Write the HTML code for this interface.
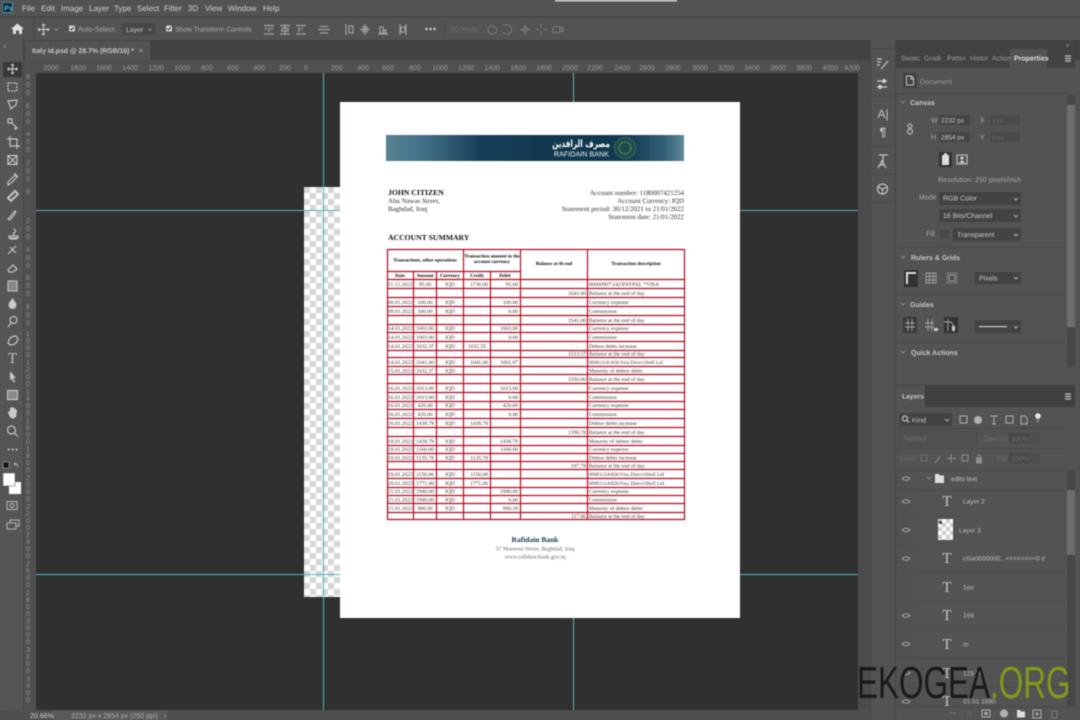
<!DOCTYPE html>
<html><head><meta charset="utf-8"><title>Photoshop</title>
<style>
html,body{margin:0;padding:0;background:#535353;width:1080px;height:720px;overflow:hidden}
svg{display:block;filter:blur(.5px);text-rendering:geometricPrecision}
text{font-family:"Liberation Sans","DejaVu Sans",sans-serif;font-size:7px;fill:#bdbdbd}
.menu text{font-size:8px;fill:#d0d0d0}
.rul text{font-size:7px;fill:#9a9a9a;text-anchor:middle}
.vr text{font-size:7px;fill:#929292;text-anchor:middle}
.ic{fill:none;stroke:#c4c4c4;stroke-width:1.2}
.icd{fill:none;stroke:#8a8a8a;stroke-width:1}
.fl{fill:#c8c8c8;stroke:none}
.b{font-weight:bold;fill:#c8c8c8}
.dim{fill:#6f6f6f}
.doc text{font-family:"Liberation Serif",serif;font-size:5.5px;fill:#3a3a3a}
.doc .h{font-weight:bold;font-size:4.9px;fill:#000}
.doc .m{text-anchor:middle}
.doc .r{text-anchor:end}
.doc .s{font-size:6.9px;fill:#333}
.lay text{font-size:6.5px;fill:#bcbcbc}
.tt{font-family:"Liberation Serif",serif!important;font-size:15px!important;fill:#c4c4c4!important;text-anchor:middle}
</style></head><body>
<svg width="1080" height="720" viewBox="0 0 1080 720" xmlns="http://www.w3.org/2000/svg">
<defs>
<pattern id="ck" x="304" y="187" width="12" height="12" patternUnits="userSpaceOnUse"><rect width="12" height="12" fill="#fff"/><rect width="6" height="6" fill="#d6d6d6"/><rect x="6" y="6" width="6" height="6" fill="#d6d6d6"/></pattern>
<pattern id="ck2" x="938" y="519" width="8" height="8" patternUnits="userSpaceOnUse"><rect width="8" height="8" fill="#fff"/><rect width="4" height="4" fill="#ccc"/><rect x="4" y="4" width="4" height="4" fill="#ccc"/></pattern>
<linearGradient id="bn" x1="0" x2="1" y1="0" y2="0"><stop offset="0" stop-color="#55808f"/><stop offset=".12" stop-color="#3f6f86"/><stop offset=".3" stop-color="#173f5a"/><stop offset=".55" stop-color="#12384f"/><stop offset=".8" stop-color="#12384f"/><stop offset=".93" stop-color="#2c5a72"/><stop offset="1" stop-color="#5c8795"/></linearGradient>
<pattern id="st" width="2.5" height="3" patternUnits="userSpaceOnUse"><rect width="1" height="3" fill="#fff" opacity=".05"/></pattern>
</defs>

<!-- base -->
<rect width="1080" height="720" fill="#535353"/>
<rect y="16" width="1080" height="1.500" fill="#444"/>
<rect y="40" width="1080" height="20" fill="#424242"/>
<rect x="25" y="41" width="125" height="19" fill="#535353"/>
<rect x="24" y="60" width="846" height="13" fill="#505050"/>
<rect x="24" y="60" width="12" height="650" fill="#505050"/>
<rect x="0" y="40" width="24" height="670" fill="#555"/>
<rect x="23" y="40" width="1" height="670" fill="#444"/>
<rect x="36" y="73" width="822" height="637" fill="#303030"/>
<rect x="858" y="60" width="12" height="650" fill="#4b4b4b"/>
<rect x="0" y="710" width="870" height="10" fill="#4f4f4f"/>
<rect x="52" y="710" width="115" height="10" fill="#5a5a5a"/>
<rect x="555" y="0" width="122" height="1.500" fill="#ddd"/>

<!-- menu -->
<rect x="2.500" y="2.500" width="10" height="10" fill="#0d2a3d" stroke="#3f8fa5"/>
<text x="4.300" y="10.300" style="font-size:7px;font-weight:bold;fill:#5fb8d8">Ps</text>
<g class="menu">
<text x="22" y="11">File</text><text x="41" y="11">Edit</text><text x="61" y="11">Image</text><text x="89" y="11">Layer</text><text x="114" y="11">Type</text><text x="137" y="11">Select</text><text x="164" y="11">Filter</text><text x="188" y="11">3D</text><text x="205" y="11">View</text><text x="228" y="11">Window</text><text x="263" y="11">Help</text>
</g>

<!-- options bar -->
<path class="fl" d="M17.500 23.500l6.500 5.500h-2v5h-3v-3.500h-3v3.500h-3v-5h-2z" style="fill:#e0e0e0"/>
<rect x="33.500" y="18" width="0.800" height="21" fill="#444"/>
<path class="ic" d="M43.500 24v11M38 29.500h11M43.500 24l-1.500 1.500M43.500 24l1.500 1.500M43.500 35l-1.500-1.500M43.500 35l1.500-1.500M38 29.500l1.500-1.500M38 29.500l1.500 1.500M49 29.500l-1.500-1.500M49 29.500l-1.500 1.500"/>
<path class="icd" d="M54.500 28.500l2 2 2-2"/>
<rect x="69" y="25.500" width="6" height="6" rx="1" fill="#d8d8d8"/><path d="M70 28.500l1.500 1.500 2.500-3" stroke="#444" fill="none"/>
<text x="78" y="31.500" style="fill:#adadad">Auto-Select:</text>
<rect x="122" y="23" width="33" height="12" fill="#474747"/>
<text x="126" y="32" style="fill:#c4c4c4">Layer</text>
<path class="icd" d="M148 28.500l2 2 2-2"/>
<rect x="166" y="25.500" width="6" height="6" rx="1" fill="#d8d8d8"/><path d="M167 28.500l1.500 1.500 2.500-3" stroke="#444" fill="none"/>
<text x="175" y="31.500" style="fill:#adadad;font-size:6.800px">Show Transform Controls</text>
<g class="ic" style="stroke:#a0a0a0">
<path d="M264 25.500h10M266 27v3M269 27v5M272 27v3M264 34h10"/>
<path d="M280 25.500h10M285 24v11M282 28h6v3h-6zM280 34h10"/>
<path d="M296 25.500h10M299 27v5M302 27v3M296 34h10"/>
<path d="M318 29.500h12M320 26.500h8M320 33h8"/>
<path d="M346 24v11M349 26h4v7h-4z"/>
<path d="M360 29.500h10M363 27h4v5h-4zM365 24v11"/>
<path d="M378 34h10M380 27h3v6h-3zM384 30h2v3h-2z"/>
<path d="M400 24v11M406 24v11M401 27h4v5h-4z"/>
</g>
<circle cx="426.500" cy="29" r="1.200" fill="#d8d8d8"/><circle cx="430.500" cy="29" r="1.200" fill="#d8d8d8"/><circle cx="434.500" cy="29" r="1.200" fill="#d8d8d8"/>
<rect x="444" y="20" width="0.800" height="18" fill="#484848"/>
<text x="450" y="31.500" class="dim">3D Mode:</text>
<g class="icd" style="stroke:#7d7d7d">
<path d="M488 28l4-3 5 4-1 4-5 1-3-3z"/>
<path d="M503 25h5a4 4 0 1 1-2 9 4 4 0 0 1-3-2"/>
<path d="M525 24v11M520 29.500h11"/><circle cx="525" cy="29.500" r="2.500"/>
<path d="M541 24v3M541 32v3M536 29.500h3M544 29.500h3"/>
<rect x="553" y="26.500" width="7" height="6"/><path d="M560 29l3-2v5l-3-2"/>
</g>

<!-- tab -->
<text x="32" y="53" style="font-weight:bold;fill:#c8c8c8;font-size:6.900px">Italy id.psd @ 28.7% (RGB/16) *</text>
<path class="icd" d="M139.500 49l3 3M142.500 49l-3 3"/>
<text x="3" y="48" style="font-size:6px;fill:#aaa">»</text>
<text x="886" y="47" style="font-size:6px;fill:#aaa">«</text>
<text x="1066" y="47" style="font-size:6px;fill:#aaa">»</text>

<!-- rulers -->
<g class="rul">
<text x="51" y="70">2000</text><text x="78" y="70">1800</text><text x="104" y="70">1600</text><text x="130" y="70">1400</text><text x="156" y="70">1200</text><text x="182" y="70">1000</text><text x="207" y="70">800</text><text x="233" y="70">600</text><text x="259" y="70">400</text><text x="285" y="70">200</text><text x="306" y="70">0</text><text x="337" y="70">200</text><text x="363" y="70">400</text><text x="388" y="70">600</text><text x="415" y="70">800</text><text x="440" y="70">1000</text><text x="466" y="70">1200</text><text x="492" y="70">1400</text><text x="518" y="70">1600</text><text x="544" y="70">1800</text><text x="570" y="70">2000</text><text x="595" y="70">2200</text><text x="622" y="70">2400</text><text x="647" y="70">2600</text><text x="673" y="70">2800</text><text x="700" y="70">3000</text><text x="726" y="70">3200</text><text x="752" y="70">3400</text><text x="778" y="70">3600</text><text x="804" y="70">3800</text><text x="830" y="70">4000</text><text x="852" y="70">4200</text>
</g>
<g class="vr">
<text x="28" y="79">8</text><text x="28" y="87">0</text><text x="28" y="95">0</text>
<text x="28" y="108">6</text><text x="28" y="116">0</text><text x="28" y="124">0</text>
<text x="28" y="136">4</text><text x="28" y="144">0</text><text x="28" y="152">0</text>
<text x="28" y="165">2</text><text x="28" y="173">0</text><text x="28" y="181">0</text>
<text x="28" y="194">0</text>
<text x="28" y="223">2</text><text x="28" y="231">0</text><text x="28" y="239">0</text>
<text x="28" y="252">4</text><text x="28" y="260">0</text><text x="28" y="268">0</text>
<text x="28" y="280">6</text><text x="28" y="288">0</text><text x="28" y="296">0</text>
<text x="28" y="309">8</text><text x="28" y="317">0</text><text x="28" y="325">0</text>
<text x="28" y="336">1</text><text x="28" y="343">0</text><text x="28" y="350">0</text><text x="28" y="357">0</text>
<text x="28" y="365">1</text><text x="28" y="372">2</text><text x="28" y="379">0</text><text x="28" y="386">0</text>
<text x="28" y="394">1</text><text x="28" y="401">4</text><text x="28" y="408">0</text><text x="28" y="415">0</text>
<text x="28" y="423">1</text><text x="28" y="430">6</text><text x="28" y="437">0</text><text x="28" y="444">0</text>
<text x="28" y="451">1</text><text x="28" y="458">8</text><text x="28" y="465">0</text><text x="28" y="472">0</text>
<text x="28" y="480">2</text><text x="28" y="487">0</text><text x="28" y="494">0</text><text x="28" y="501">0</text>
<text x="28" y="509">2</text><text x="28" y="516">2</text><text x="28" y="523">0</text><text x="28" y="530">0</text>
<text x="28" y="537">2</text><text x="28" y="544">4</text><text x="28" y="551">0</text><text x="28" y="558">0</text>
<text x="28" y="566">2</text><text x="28" y="573">6</text><text x="28" y="580">0</text><text x="28" y="587">0</text>
<text x="28" y="595">2</text><text x="28" y="602">8</text><text x="28" y="609">0</text><text x="28" y="616">0</text>
<text x="28" y="623">3</text><text x="28" y="630">0</text><text x="28" y="637">0</text><text x="28" y="644">0</text>
<text x="28" y="652">3</text><text x="28" y="659">2</text><text x="28" y="666">0</text><text x="28" y="673">0</text>
<text x="28" y="681">3</text><text x="28" y="688">4</text><text x="28" y="695">0</text><text x="28" y="702">0</text>
</g>

<!-- canvas -->
<rect x="304" y="187" width="36" height="410" fill="url(#ck)"/>
<rect x="340" y="102" width="400" height="516" fill="#fff"/>
<rect x="323" y="73" width="1" height="637" fill="#55b5b5"/>
<rect x="573" y="73" width="1" height="29" fill="#55b5b5"/>
<rect x="573" y="618" width="1" height="92" fill="#55b5b5"/>
<rect x="36" y="210" width="304" height="1" fill="#55b5b5"/>
<rect x="740" y="210" width="118" height="1" fill="#55b5b5"/>
<rect x="36" y="574" width="304" height="1" fill="#55b5b5"/>
<rect x="740" y="574" width="118" height="1" fill="#55b5b5"/>

<!-- document -->
<g class="doc">
<rect x="386" y="135" width="298" height="26" fill="url(#bn)"/>
<rect x="386" y="135" width="90" height="26" fill="url(#st)"/>
<rect x="650" y="135" width="34" height="26" fill="url(#st)"/>
<circle cx="625" cy="148" r="10.500" fill="#1d4a4a" stroke="#3c6e55" stroke-width="1"/>
<circle cx="625" cy="148" r="6" fill="none" stroke="#5a8a5a" stroke-width="1.500" stroke-dasharray="2 1"/>
<text transform="translate(610 147) scale(.73 1)" style="font-family:'DejaVu Sans',sans-serif;font-size:10px;font-weight:bold;fill:#fff;text-anchor:end">مصرف الرافدين</text>
<text x="609" y="156.500" style="font-family:'Liberation Sans',sans-serif;font-size:7.200px;fill:#e8eef2;text-anchor:end">RAFIDAIN BANK</text>

<text x="388" y="195" style="font-size:7.700px;font-weight:bold;fill:#111">JOHN CITIZEN</text>
<text x="388" y="203" class="s">Abu Nawas Street,</text>
<text x="388" y="211" class="s">Baghdad, Iraq</text>
<text x="684" y="195" class="s r">Account number: 1180007421254</text>
<text x="684" y="203" class="s r">Account Currency: IQD</text>
<text x="684" y="211" class="s r">Statement period: 30/12/2021 to 21/01/2022</text>
<text x="684" y="219" class="s r">Statement date: 21/01/2022</text>
<text x="388" y="240" style="font-size:7.700px;font-weight:bold;fill:#111">ACCOUNT SUMMARY</text>

<!-- table grid -->
<g stroke="#b00c20" stroke-width="1.200" fill="none">
<path d="M387.500 249.500H684.500M387.500 271.500H520M387.500 279.500H684.500"/>
<path d="M387.500 249V520M463.500 249V520M520.500 249V520M587.500 249V520M684.500 249V520M413.500 271V520M436.500 271V520M490.500 271V520"/>
<path d="M387 288.500H685M387 297.500H685M387 306.500H685M387 315.500H685M387 324.500H685M387 332.500H685M387 341.500H685M387 350.500H685M387 357.500H685M387 366.500H685M387 374.500H685M387 383.500H685M387 392.500H685M387 401.500H685M387 409.500H685M387 418.500H685M387 427.500H685M387 436.500H685M387 445.500H685M387 453.500H685M387 461.500H685M387 469.500H685M387 478.500H685M387 487.500H685M387 495.500H685M387 503.500H685M387 512.500H685M387 519.500H685"/>
</g>
<text x="425" y="261.500" class="h m">Transactions, other operations</text>
<text x="492" y="257.500" class="h m">Transaction amount in the</text>
<text x="492" y="263" class="h m">account currency</text>
<text x="554" y="265" class="h m">Balance at th end</text>
<text x="636" y="265" class="h m">Transaction description</text>
<text x="400" y="277" class="h m">Date</text><text x="425" y="277" class="h m">Amount</text><text x="450" y="277" class="h m">Currency</text><text x="477" y="277" class="h m">Credit</text><text x="505" y="277" class="h m">Debit</text>

<text x="388" y="286">11.12.2022</text><text x="425" y="286" class="m">95.00</text><text x="450" y="286" class="m">IQD</text><text x="488" y="286" class="r">1736.00</text><text x="518" y="286" class="r">95.00</text><text x="589" y="286">00000907\142\PAYPAL *VISA</text>
<text x="586" y="295" class="r">1641.00</text><text x="589" y="295">Balance at the end of day</text>
<text x="388" y="304">08.01.2022</text><text x="425" y="304" class="m">100.00</text><text x="450" y="304" class="m">IQD</text><text x="518" y="304" class="r">100.00</text><text x="589" y="304">Currency expense</text>
<text x="388" y="313">09.01.2022</text><text x="425" y="313" class="m">100.00</text><text x="450" y="313" class="m">IQD</text><text x="518" y="313" class="r">0.00</text><text x="589" y="313">Commission</text>
<text x="586" y="322" class="r">1541.00</text><text x="589" y="322">Balance at the end of day</text>
<text x="388" y="330">14.01.2022</text><text x="425" y="330" class="m">1003.00</text><text x="450" y="330" class="m">IQD</text><text x="518" y="330" class="r">1003.00</text><text x="589" y="330">Currency expense</text>
<text x="388" y="339">14.01.2022</text><text x="425" y="339" class="m">1003.00</text><text x="450" y="339" class="m">IQD</text><text x="518" y="339" class="r">0.00</text><text x="589" y="339">Commission</text>
<text x="388" y="348">14.01.2022</text><text x="425" y="348" class="m">1032.37</text><text x="450" y="348" class="m">IQD</text><text x="486" y="348" class="r">1032.55</text><text x="589" y="348">Debtor debts increase</text>
<text x="586" y="355.500" class="r">1513.57</text><text x="589" y="355.500">Balance at the end of day</text>
<text x="388" y="364">14.01.2022</text><text x="425" y="364" class="m">1041.00</text><text x="450" y="364" class="m">IQD</text><text x="488" y="364" class="r">1041.00</text><text x="518" y="364" class="r">1002.87</text><text x="589" y="364" style="font-size:5px">00001114\\826\Visa Direct\Shell Ltd</text>
<text x="388" y="372.500">15.01.2022</text><text x="425" y="372.500" class="m">1032.37</text><text x="450" y="372.500" class="m">IQD</text><text x="589" y="372.500">Maturity of debtor debts</text>
<text x="586" y="381" class="r">1550.00</text><text x="589" y="381">Balance at the end of day</text>
<text x="388" y="390">16.01.2022</text><text x="425" y="390" class="m">1013.00</text><text x="450" y="390" class="m">IQD</text><text x="518" y="390" class="r">1013.00</text><text x="589" y="390">Currency expense</text>
<text x="388" y="399">16.01.2022</text><text x="425" y="399" class="m">1013.00</text><text x="450" y="399" class="m">IQD</text><text x="518" y="399" class="r">0.00</text><text x="589" y="399">Commission</text>
<text x="388" y="407">16.01.2022</text><text x="425" y="407" class="m">420.00</text><text x="450" y="407" class="m">IQD</text><text x="518" y="407" class="r">420.00</text><text x="589" y="407">Currency expense</text>
<text x="388" y="416">16.01.2022</text><text x="425" y="416" class="m">420.00</text><text x="450" y="416" class="m">IQD</text><text x="518" y="416" class="r">0.00</text><text x="589" y="416">Commission</text>
<text x="388" y="425">16.01.2022</text><text x="425" y="425" class="m">1438.78</text><text x="450" y="425" class="m">IQD</text><text x="488" y="425" class="r">1438.78</text><text x="589" y="425">Debtor debts increase</text>
<text x="586" y="434" class="r">1390.78</text><text x="589" y="434">Balance at the end of day</text>
<text x="388" y="443">18.01.2022</text><text x="425" y="443" class="m">1438.78</text><text x="450" y="443" class="m">IQD</text><text x="518" y="443" class="r">1438.78</text><text x="589" y="443">Maturity of debtor debts</text>
<text x="388" y="451">18.01.2022</text><text x="425" y="451" class="m">1160.00</text><text x="450" y="451" class="m">IQD</text><text x="518" y="451" class="r">1160.00</text><text x="589" y="451">Currency expense</text>
<text x="388" y="459.500">18.01.2022</text><text x="425" y="459.500" class="m">1135.78</text><text x="450" y="459.500" class="m">IQD</text><text x="488" y="459.500" class="r">1135.78</text><text x="589" y="459.500">Debtor debts increase</text>
<text x="586" y="467.500" class="r">107.78</text><text x="589" y="467.500">Balance at the end of day</text>
<text x="388" y="476">18.01.2022</text><text x="425" y="476" class="m">1150.00</text><text x="450" y="476" class="m">IQD</text><text x="488" y="476" class="r">1150.00</text><text x="589" y="476" style="font-size:5.200px">00001114\826\Visa Direct\Shell Ltd</text>
<text x="388" y="485">20.01.2022</text><text x="425" y="485" class="m">1771.00</text><text x="450" y="485" class="m">IQD</text><text x="488" y="485" class="r">1771.00</text><text x="589" y="485" style="font-size:5.200px">00001114\826\Visa Direct\Shell Ltd</text>
<text x="388" y="493">21.01.2022</text><text x="425" y="493" class="m">1940.00</text><text x="450" y="493" class="m">IQD</text><text x="518" y="493" class="r">1940.00</text><text x="589" y="493">Currency expense</text>
<text x="388" y="501.500">21.01.2022</text><text x="425" y="501.500" class="m">1940.00</text><text x="450" y="501.500" class="m">IQD</text><text x="518" y="501.500" class="r">0.00</text><text x="589" y="501.500">Commission</text>
<text x="388" y="510">21.01.2022</text><text x="425" y="510" class="m">880.00</text><text x="450" y="510" class="m">IQD</text><text x="518" y="510" class="r">880.28</text><text x="589" y="510">Maturity of debtor debts</text>
<text x="586" y="518" class="r">117.86</text><text x="589" y="518">Balance at the end of day</text>

<text x="535" y="542" class="m" style="font-size:7.500px;font-weight:bold;fill:#16384f">Rafidain Bank</text>
<text x="535" y="550.500" class="m" style="font-size:5.800px;fill:#666">57 Mansour Street, Baghdad, Iraq</text>
<text x="535" y="558.500" class="m" style="font-size:5.800px;fill:#666">www.rafidain-bank.gov.iq</text>
</g>

<!-- toolbar -->
<rect x="3" y="62" width="19" height="15" fill="#383838"/>
<g class="ic">
<path d="M12.500 64v10M7.500 69h10M12.500 64l-1.500 1.500M12.500 64l1.500 1.500M12.500 74l-1.500-1.500M12.500 74l1.500-1.500M7.500 69l1.500-1.500M7.500 69l1.500 1.500M17.500 69l-1.500-1.500M17.500 69l-1.500 1.500"/>
<rect x="8" y="83" width="9" height="8" stroke-dasharray="2 1"/>
<path d="M8 101l9-1-1 5-3 2-2 2-1-3z"/>
<path d="M8 119h4v4h-4zM12 123l5 5-2 0 1 2"/>
<path d="M10 136v10h10M7 139h10v10"/>
<rect x="8" y="155.500" width="9" height="9"/><path d="M8 155.500l9 9M17 155.500l-9 9"/>
<path d="M8 182l7-7 2 2-7 7-2 1zM14 173l4 4"/>
<path d="M8 198l7-7 3 3-7 7z" stroke-width="2"/>
<path d="M8 219l7-8 1 1-6 8z"/>
<path d="M10 239h7M9 236h9v2h-9zM13.500 229a2 2 0 0 1 0 4v3"/>
<path d="M8 254l8-8M10 247l6 6"/>
<path d="M8 270l5-5 4 4-4 3h-4z"/>
<rect x="8" y="281" width="9" height="10"/>
</g>
<rect x="8" y="281" width="9" height="10" fill="#aaa" opacity=".6"/>
<path class="fl" d="M12.500 298c2 3 4 5 4 7a4 4 0 0 1-8 0c0-2 2-4 4-7z"/>
<g class="ic">
<circle cx="13.500" cy="320" r="3.500"/><path d="M11 323l-3 4"/>
<path d="M8 343c1-5 4-7 8-7l2 3c-1 4-4 6-8 6z"/>
<rect x="8" y="390.500" width="9" height="9"/>
<circle cx="11.500" cy="430" r="4"/><path d="M14.500 433l3.500 3.500"/>
</g>
<text x="12.500" y="363" class="tt">T</text>
<path class="fl" d="M10 371l6 7h-3l2 4-1.500.5-2-4-1.500 2z"/>
<rect x="7.500" y="390.500" width="10" height="9" fill="#8a8a8a" stroke="#ccc"/>
<path class="fl" d="M10 408c2-1 3-1 4 0s3 1 3 3l-1 6c-2 2-5 2-6 0l-2-4c0-1 1-2 2-2z"/>
<circle cx="8.500" cy="449.500" r="1" fill="#ccc"/><circle cx="12.500" cy="449.500" r="1" fill="#ccc"/><circle cx="16.500" cy="449.500" r="1" fill="#ccc"/>
<rect x="3" y="462" width="6" height="6" fill="#111" stroke="#ccc" stroke-width=".5"/>
<path class="ic" d="M14 464l3 0 1 3M14 464l1.500-1.500M14 464l1.500 1.500" style="stroke-width:.8"/>
<rect x="9" y="482" width="12" height="12" fill="#fff"/>
<rect x="3" y="473" width="12" height="13" fill="#fff" stroke="#555" stroke-width=".5"/>
<g class="ic" style="stroke:#a8a8a8">
<rect x="7" y="501.500" width="10" height="8"/><circle cx="12" cy="505.500" r="2"/>
<rect x="10" y="520" width="9" height="6"/><rect x="7" y="523" width="9" height="6" fill="#555"/>
</g>

<!-- status -->
<text x="30" y="718" style="fill:#d4d4d4">20.66%</text>
<text x="71" y="718" style="fill:#b0b0b0">2232 px x 2854 px (250 ppi)</text>
<text x="164" y="718" style="fill:#b0b0b0">›</text>

<!-- right column -->
<rect x="870" y="40" width="25" height="680" fill="#535353"/>
<rect x="870" y="40" width="1" height="680" fill="#444"/>
<rect x="895" y="40" width="1" height="680" fill="#424242"/>
<rect x="871" y="48" width="24" height="1" fill="#444"/>
<rect x="871" y="96" width="24" height="1" fill="#484848"/>
<rect x="871" y="146" width="24" height="1" fill="#484848"/>
<rect x="871" y="174" width="24" height="1" fill="#484848"/>
<rect x="871" y="202" width="24" height="1" fill="#484848"/>
<g class="ic">
<path d="M877 59h5M877 62h4M877 65h3M881 69l7-8" />
<path d="M877 81h10M877 87h10"/><circle cx="884" cy="81" r="1.500" fill="#ddd"/><circle cx="880" cy="87" r="1.500" fill="#ddd"/>
</g>
<text x="883" y="118" style="font-size:12px;fill:#c4c4c4;text-anchor:middle">A|</text>
<text x="883" y="136" style="font-size:12px;fill:#c4c4c4;text-anchor:middle;font-weight:bold">¶</text>
<path class="ic" d="M879 155h9M883 155v10M878 168l4-7 4 7M880 165l3 0" />
<circle cx="882.500" cy="189" r="5" class="ic"/><path class="ic" d="M878 187l4.500 2 5-2M882.500 189v5"/>

<!-- properties -->
<rect x="896" y="49" width="179" height="19" fill="#424242"/>
<rect x="1010" y="49" width="37" height="19" fill="#535353"/>
<text x="901" y="60.500" style="fill:#9c9c9c">Swatc</text><text x="924" y="60.500" style="fill:#9c9c9c">Gradi</text><text x="947" y="60.500" style="fill:#9c9c9c">Patter</text><text x="970" y="60.500" style="fill:#9c9c9c">Histor</text><text x="992" y="60.500" style="fill:#9c9c9c">Action</text>
<text x="1014" y="60.500" style="font-weight:bold;fill:#e0e0e0">Properties</text>
<path class="ic" d="M1065 56h6M1065 58.500h6M1065 61h6"/>
<rect x="903" y="73" width="14" height="15" fill="#424242"/>
<path class="ic" d="M906.500 76h5l2 2v7h-7zM911 76v3h2.500" style="stroke-width:1"/>
<text x="920" y="84" style="fill:#9a9a9a">Document</text>
<rect x="897" y="93" width="168" height="1" fill="#484848"/>
<rect x="1067" y="95" width="8" height="272" fill="#474747"/>
<rect x="1067" y="105" width="8" height="222" fill="#6d6d6d"/>
<path class="icd" d="M901 101l2 2 2-2"/>
<text x="910" y="105" class="b">Canvas</text>
<text x="931" y="122.500" style="fill:#aaa">W</text><text x="931" y="139.500" style="fill:#aaa">H</text>
<rect x="939" y="115" width="31" height="10" fill="#454545"/><rect x="939" y="132" width="31" height="10" fill="#454545"/>
<text x="941" y="122.500" style="fill:#c8c8c8;font-size:6.500px">2232 px</text><text x="941" y="139.500" style="fill:#c8c8c8;font-size:6.500px">2854 px</text>
<text x="980" y="122.500" style="fill:#aaa">X</text><text x="980" y="139.500" style="fill:#aaa">Y</text>
<rect x="990" y="115" width="30" height="10" fill="#4a4a4a"/><rect x="990" y="132" width="30" height="10" fill="#4a4a4a"/>
<text x="992" y="122.500" class="dim" style="font-size:6px">0 px</text><text x="992" y="139.500" class="dim" style="font-size:6px">0 px</text>
<path class="ic" d="M910 124a2 2 0 0 1 0 4 2 2 0 0 1 0-4zM910 129a2 2 0 0 1 0 5 2 2 0 0 1 0-5z" style="stroke-width:1.400;stroke:#aaa"/>
<rect x="939" y="152" width="13" height="15" fill="#333"/>
<rect x="942" y="155" width="7" height="10" fill="#ddd"/><circle cx="945.500" cy="154.500" r="1.500" fill="#ddd"/>
<rect x="957" y="155" width="10" height="9" fill="none" stroke="#ccc"/><circle cx="962" cy="158" r="1.500" fill="#ddd"/><path class="fl" d="M958.500 163l3.500-3 3.500 3z"/>
<text x="938" y="182" style="fill:#a8a8a8">Resolution: 250 pixels/inch</text>
<text x="919" y="199.500" style="fill:#a8a8a8">Mode</text>
<rect x="939" y="192" width="82" height="13" fill="#434343"/><text x="943" y="200.500" style="fill:#c8c8c8">RGB Color</text>
<rect x="939" y="209" width="82" height="13" fill="#434343"/><text x="943" y="218" style="fill:#c8c8c8">16 Bits/Channel</text>
<text x="926" y="236" style="fill:#a8a8a8">Fill</text>
<rect x="939" y="229" width="11" height="11" fill="#4a4a4a" stroke="#5b5b5b"/>
<rect x="953" y="228" width="68" height="13" fill="#434343"/><text x="957" y="237" style="fill:#c8c8c8">Transparent</text>
<path class="icd" d="M1014 198l2 2 2-2M1014 215l2 2 2-2M1014 234l2 2 2-2" style="stroke:#aaa"/>
<rect x="897" y="247" width="168" height="1" fill="#484848"/>
<path class="icd" d="M901 256l2 2 2-2"/>
<text x="911" y="260" class="b">Rulers &amp; Grids</text>
<rect x="904" y="270" width="14" height="17" fill="#333"/>
<path d="M907 284v-11h9" fill="none" stroke="#ddd" stroke-width="2"/>
<g class="ic" style="stroke:#a0a0a0;stroke-width:.9">
<path d="M926 273h10v10h-10zM926 276.500h10M926 280h10M929.500 273v10M933 273v10"/>
<rect x="947" y="273" width="10" height="10" stroke-dasharray="1.500 1"/><rect x="949" y="275" width="6" height="6"/>
</g>
<rect x="975" y="272" width="46" height="12" fill="#434343"/><text x="979" y="280.500" style="fill:#c8c8c8">Pixels</text>
<path class="icd" d="M1014 277l2 2 2-2" style="stroke:#aaa"/>
<rect x="897" y="294" width="168" height="1" fill="#484848"/>
<path class="icd" d="M901 303l2 2 2-2"/>
<text x="910" y="307" class="b">Guides</text>
<rect x="903" y="317" width="14" height="16" fill="#3a3a3a"/>
<rect x="944" y="317" width="14" height="16" fill="#333"/>
<g class="ic" style="stroke:#a8a8a8;stroke-width:.9">
<path d="M908 319v12M912 319v12M905 323h10M905 327h10"/>
<path d="M928 319v12M932 319v12M925 323h9M925 327h9"/>
<path d="M948 319v12M944 322h7l4 6"/>
</g>
<rect x="934" y="328" width="4" height="3" fill="#ccc"/><rect x="952" y="326" width="3" height="5" fill="#ccc"/>
<rect x="975" y="320" width="46" height="13" fill="#434343"/><rect x="979" y="326" width="28" height="1.200" fill="#ccc"/>
<path class="icd" d="M1014 326l2 2 2-2" style="stroke:#aaa"/>
<rect x="897" y="342" width="168" height="1" fill="#484848"/>
<path class="icd" d="M901 351l2 2 2-2"/>
<text x="911" y="355" class="b">Quick Actions</text>

<!-- layers panel -->
<rect x="896" y="385" width="179" height="22" fill="#404040"/>
<rect x="896" y="386" width="29" height="21" fill="#535353"/>
<text x="902" y="398.500" class="b" style="font-size:6.800px">Layers</text>
<path class="ic" d="M1065 394h6M1065 396.500h6M1065 399h6"/>
<rect x="899" y="413" width="53" height="13" fill="#434343"/>
<circle cx="905" cy="418.500" r="2.500" class="ic"/><path class="ic" d="M907 420.500l2 2"/>
<text x="912" y="422.500" style="fill:#c0c0c0">Kind</text>
<path class="icd" d="M945 419l2 2 2-2" style="stroke:#aaa"/>
<g class="ic" style="stroke:#b0b0b0;stroke-width:1">
<rect x="960" y="416" width="7" height="7"/>
<circle cx="978" cy="420" r="3.500" fill="#b0b0b0"/>
<path d="M990 416h8M994 416v8M992 424h4"/>
<rect x="1006" y="416" width="7" height="7"/>
<path d="M1021 416h4l2 2v6h-6z"/>
</g>
<circle cx="1038" cy="416" r="2.800" fill="#e8e8e8"/><rect x="1036.500" y="419" width="3" height="3.500" fill="#777"/>
<rect x="897" y="428" width="168" height="1" fill="#484848"/>
<rect x="899" y="432" width="78" height="13" fill="#505050" stroke="#4a4a4a"/>
<text x="904" y="441" class="dim">Normal</text><text x="983" y="441" class="dim">Opacity:</text>
<rect x="1009" y="433" width="20" height="10" fill="#484848"/><text x="1011" y="441" class="dim">100%</text>
<rect x="1029" y="433" width="11" height="10" fill="#4e4e4e"/>
<rect x="897" y="448" width="168" height="1" fill="#484848"/>
<text x="900" y="461" class="dim">Lock:</text><text x="997" y="461" class="dim">Fill:</text>
<rect x="1009" y="453" width="20" height="10" fill="#484848"/><text x="1011" y="461" class="dim">100%</text>
<rect x="1029" y="453" width="11" height="10" fill="#4e4e4e"/>
<g class="ic" style="stroke:#909090;stroke-width:1">
<rect x="921" y="455" width="6" height="6" stroke-dasharray="1 1"/>
<path d="M935 463l5-7"/>
<path d="M951 454v9M947 458.500h9"/>
<rect x="962" y="455" width="6" height="6"/>
<rect x="976.500" y="458" width="5" height="5" fill="#909090"/><path d="M977.500 458v-1.500a1.500 1.500 0 0 1 3 0v1.500"/>
</g>
<rect x="897" y="470" width="168" height="1" fill="#484848"/>
<rect x="1067" y="470" width="8" height="236" fill="#474747"/>
<rect x="1067" y="490" width="8" height="65" fill="#6d6d6d"/>
<rect x="896" y="471" width="20" height="235" fill="#515151"/>

<g class="lay">
<g fill="none" stroke="#a0a0a0" stroke-width="1">
<path d="M902 478.500q4-3.500 8 0q-4 3.500-8 0z"/><path d="M902 501.500q4-3.500 8 0q-4 3.500-8 0z"/><path d="M902 530q4-3.500 8 0q-4 3.500-8 0z"/><path d="M902 558.500q4-3.500 8 0q-4 3.500-8 0z"/><path d="M902 615.500q4-3.500 8 0q-4 3.500-8 0z"/><path d="M902 644q4-3.500 8 0q-4 3.500-8 0z"/><path d="M902 673q4-3.500 8 0q-4 3.500-8 0z"/><path d="M902 701.500q4-3.500 8 0q-4 3.500-8 0z"/>
</g>
<path class="icd" d="M927 477l2 2 2-2"/>
<path class="fl" d="M935 474h4l1 1.500h4v7.500h-9z" style="fill:#dedede"/>
<text x="951" y="481" style="fill:#c8c8c8">edits text</text>
<rect x="897" y="490" width="168" height="0.800" fill="#4a4a4a"/>
<text x="947" y="506" class="tt">T</text><text x="963" y="503.500">Layer 2</text>
<rect x="897" y="515" width="168" height="0.800" fill="#4a4a4a"/>
<rect x="938" y="519" width="15" height="21" fill="url(#ck2)"/><rect x="939" y="521" width="3" height="3" fill="#444"/>
<text x="959" y="532.500">Layer 3</text>
<rect x="897" y="544" width="168" height="0.800" fill="#4a4a4a"/>
<text x="947" y="563" class="tt">T</text><text x="963" y="560.500">c6ia0000000...&lt;&lt;&lt;&lt;&lt;&lt;&lt;&lt;0 d</text>
<rect x="897" y="572" width="168" height="0.800" fill="#4a4a4a"/>
<text x="947" y="592" class="tt">T</text><text x="963" y="589.500">1ee</text>
<rect x="897" y="601" width="168" height="0.800" fill="#4a4a4a"/>
<text x="947" y="620" class="tt">T</text><text x="963" y="617.500">169</text>
<rect x="897" y="630" width="168" height="0.800" fill="#4a4a4a"/>
<text x="947" y="649" class="tt">T</text><text x="963" y="646.500">m</text>
<rect x="897" y="658" width="168" height="0.800" fill="#4a4a4a"/>
<text x="947" y="678" class="tt">T</text><text x="963" y="675.500">129 in</text>
<rect x="897" y="687" width="168" height="0.800" fill="#4a4a4a"/>
<text x="947" y="706" class="tt">T</text><text x="963" y="703.500">01.01.1990</text>
</g>
<rect x="896" y="707" width="179" height="13" fill="#535353"/>
<rect x="896" y="706.500" width="179" height="0.800" fill="#484848"/>
<g class="ic" style="stroke-width:1">
<path d="M950 713h6" style="stroke:#7a7a7a"/>
<rect x="982" y="710" width="8" height="7" style="stroke:#b0b0b0"/><circle cx="986" cy="713.500" r="1.800" fill="#b0b0b0" style="stroke:none"/>
<circle cx="1004" cy="713.500" r="3.500" fill="#b0b0b0" style="stroke:#b0b0b0"/>
<path class="fl" d="M1017 710h3l1 1.500h4v6h-8z" style="fill:#dedede"/>
<rect x="1033" y="710" width="8" height="8" style="stroke:#b0b0b0"/><path d="M1037 712v4M1035 714h4" style="stroke:#b0b0b0"/>
<path d="M1051 711h7M1052 712v6h5v-6" style="stroke:#7a7a7a"/>
</g>
<text x="967" y="716" class="dim" style="font-style:italic">fx</text>

<!-- watermark -->
<text transform="translate(857 698) scale(.7 1)" style="font-size:45px;fill:#1a1a1a">EKOGEA<tspan style="fill:#7f9b18">.ORG</tspan></text>
</svg>
</body></html>
